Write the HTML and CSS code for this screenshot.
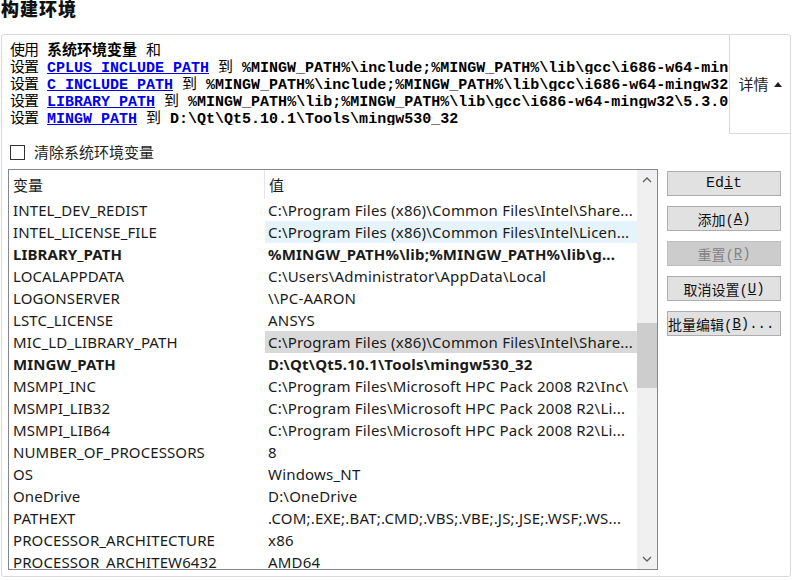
FILE: index.html
```html
<!DOCTYPE html>
<html lang="zh-CN">
<head>
<meta charset="utf-8">
<title>构建环境</title>
<link rel="stylesheet" href="styles.css">
</head>
<body>
<div class="title">构建环境</div>
<div class="panel">
  <div class="top">
    <div class="info">
      <div class="ln"><span class="cjk">使用</span> <b class="cjk">系统环境变量</b> <span class="cjk">和</span></div>
      <div class="ln"><span class="cjk">设置</span> <a class="lk">CPLUS_INCLUDE_PATH</a> <span class="cjk">到</span> <b>%MINGW_PATH%\include;%MINGW_PATH%\lib\gcc\i686-w64-mingw32\5.3.0\include</b></div>
      <div class="ln"><span class="cjk">设置</span> <a class="lk">C_INCLUDE_PATH</a> <span class="cjk">到</span> <b>%MINGW_PATH%\include;%MINGW_PATH%\lib\gcc\i686-w64-mingw32\5.3.0\include</b></div>
      <div class="ln"><span class="cjk">设置</span> <a class="lk">LIBRARY_PATH</a> <span class="cjk">到</span> <b>%MINGW_PATH%\lib;%MINGW_PATH%\lib\gcc\i686-w64-mingw32\5.3.0</b></div>
      <div class="ln"><span class="cjk">设置</span> <a class="lk">MINGW_PATH</a> <span class="cjk">到</span> <b>D:\Qt\Qt5.10.1\Tools\mingw530_32</b></div>
    </div>
    <div class="details"><span>详情</span><span class="tri"></span></div>
  </div>
  <label class="check"><span class="box"></span><span>清除系统环境变量</span></label>
  <div class="main">
    <div class="list">
      <div class="table">
        <div class="head">
          <div class="hc c1">变量</div>
          <div class="hc c2">值</div>
        </div>
        <div class="row"><div class="c1">INTEL_DEV_REDIST</div><div class="c2">C:\Program Files (x86)\Common Files\Intel\Share...</div></div>
        <div class="row"><div class="c1">INTEL_LICENSE_FILE</div><div class="c2 hover">C:\Program Files (x86)\Common Files\Intel\Licen...</div></div>
        <div class="row bold"><div class="c1">LIBRARY_PATH</div><div class="c2">%MINGW_PATH%\lib;%MINGW_PATH%\lib\g...</div></div>
        <div class="row"><div class="c1">LOCALAPPDATA</div><div class="c2">C:\Users\Administrator\AppData\Local</div></div>
        <div class="row"><div class="c1">LOGONSERVER</div><div class="c2">\\PC-AARON</div></div>
        <div class="row"><div class="c1">LSTC_LICENSE</div><div class="c2">ANSYS</div></div>
        <div class="row"><div class="c1">MIC_LD_LIBRARY_PATH</div><div class="c2 sel">C:\Program Files (x86)\Common Files\Intel\Share...</div></div>
        <div class="row bold"><div class="c1">MINGW_PATH</div><div class="c2">D:\Qt\Qt5.10.1\Tools\mingw530_32</div></div>
        <div class="row"><div class="c1">MSMPI_INC</div><div class="c2">C:\Program Files\Microsoft HPC Pack 2008 R2\Inc\</div></div>
        <div class="row"><div class="c1">MSMPI_LIB32</div><div class="c2">C:\Program Files\Microsoft HPC Pack 2008 R2\Li...</div></div>
        <div class="row"><div class="c1">MSMPI_LIB64</div><div class="c2">C:\Program Files\Microsoft HPC Pack 2008 R2\Li...</div></div>
        <div class="row"><div class="c1">NUMBER_OF_PROCESSORS</div><div class="c2">8</div></div>
        <div class="row"><div class="c1">OS</div><div class="c2">Windows_NT</div></div>
        <div class="row"><div class="c1">OneDrive</div><div class="c2">D:\OneDrive</div></div>
        <div class="row"><div class="c1">PATHEXT</div><div class="c2">.COM;.EXE;.BAT;.CMD;.VBS;.VBE;.JS;.JSE;.WSF;.WS...</div></div>
        <div class="row"><div class="c1">PROCESSOR_ARCHITECTURE</div><div class="c2">x86</div></div>
        <div class="row"><div class="c1">PROCESSOR_ARCHITEW6432</div><div class="c2">AMD64</div></div>
      </div>
      <div class="scroll">
        <div class="arrow">
          <svg width="10" height="6" viewBox="0 0 10 6"><path d="M1 5 L5 1 L9 5" fill="none" stroke="#606060" stroke-width="1.3"/></svg>
        </div>
        <div class="track">
          <div class="thumb"></div>
        </div>
        <div class="arrow">
          <svg width="10" height="6" viewBox="0 0 10 6"><path d="M1 1 L5 5 L9 1" fill="none" stroke="#606060" stroke-width="1.3"/></svg>
        </div>
      </div>
    </div>
    <div class="buttons">
      <div class="btn mono">Ed<u>i</u>t</div>
      <div class="btn">添加(<u>A</u>)</div>
      <div class="btn disabled">重置(<u>R</u>)</div>
      <div class="btn">取消设置(<u>U</u>)</div>
      <div class="btn left">批量编辑(<u>B</u>)...</div>
    </div>
  </div>
</div>
</body>
</html>
```

FILE: styles.css
```css
html, body {
  margin: 0;
  padding: 0;
  background: #ffffff;
}
body {
  width: 799px;
  height: 581px;
  overflow: hidden;
  font-family: "Noto Sans", "Noto Sans CJK SC", sans-serif;
  color: #000;
}
.title {
  height: 18px;
  line-height: 16px;
  padding-left: 1px;
  font-family: "Noto Sans CJK SC", sans-serif;
  font-weight: 900;
  font-size: 18px;
  letter-spacing: 1px;
  color: #111;
  overflow: hidden;
}
.panel {
  margin-top: 16px;
  margin-left: 1px;
  width: 788px;
  height: 541px;
  border: 1px solid #dadada;
  border-radius: 3px;
}
.top {
  display: flex;
  height: 99px;
}
.info {
  flex: 1;
  min-width: 0;
  overflow: hidden;
  white-space: nowrap;
  padding: 5px 0 0 8px;
  font-family: "Liberation Mono", "Noto Sans CJK SC", monospace;
  font-size: 15px;
}
.ln {
  height: 17px;
  line-height: 17px;
  overflow: hidden;
}
.info b {
  font-weight: 700;
}
.cjk {
  font-family: "Noto Sans CJK SC", sans-serif;
  font-size: 15px;
  line-height: 17px;
}
.ln > .cjk:first-child {
  letter-spacing: -1px;
}
b.cjk {
  font-weight: 700;
}
.lk {
  color: #0000ee;
  text-decoration: underline;
  font-weight: 700;
}
.details {
  width: 60px;
  border-left: 1px solid #dadada;
  border-bottom: 1px solid #dadada;
  display: flex;
  align-items: center;
  justify-content: center;
  gap: 5px;
  font-family: "Noto Sans CJK SC", sans-serif;
  font-size: 15px;
  line-height: 18px;
  color: #222;
}
.tri {
  width: 0;
  height: 0;
  border-left: 4px solid transparent;
  border-right: 4px solid transparent;
  border-bottom: 5px solid #222;
}
.check {
  display: flex;
  align-items: center;
  height: 18px;
  margin-top: 9px;
  padding-left: 8px;
  font-family: "Noto Sans CJK SC", sans-serif;
  font-size: 15px;
  line-height: 18px;
  color: #222;
}
.box {
  width: 13px;
  height: 13px;
  border: 1px solid #333;
  margin-right: 9px;
}
.main {
  display: flex;
  margin-top: 8px;
  margin-left: 6px;
  gap: 9px;
}
.list {
  width: 648px;
  height: 399px;
  border: 1px solid #828790;
  display: flex;
  overflow: hidden;
}
.table {
  flex: 1;
  min-width: 0;
  font-size: 15px;
  color: #1a1a1a;
}
.head {
  display: flex;
  height: 29px;
  font-family: "Noto Sans CJK SC", sans-serif;
  font-size: 15px;
}
.hc {
  line-height: 29px;
}
.head .c1 {
  border-right: 1px solid #e5e5e5;
}
.row {
  display: flex;
  height: 22px;
  line-height: 22px;
}
.c1 {
  width: 251px;
  padding-left: 4px;
  white-space: nowrap;
  overflow: hidden;
  letter-spacing: 0.1px;
}
.c2 {
  flex: 1;
  min-width: 0;
  padding-left: 3px;
  margin-left: 1px;
  white-space: nowrap;
  overflow: hidden;
  text-overflow: ellipsis;
  letter-spacing: 0.2px;
}
.row.bold {
  font-weight: 700;
}
.hover {
  background: #e5f3fb;
}
.sel {
  background: #d9d9d9;
}
.scroll {
  width: 20px;
  background: #f0f0f0;
  display: flex;
  flex-direction: column;
}
.arrow {
  height: 20px;
  display: flex;
  align-items: center;
  justify-content: center;
}
.track {
  flex: 1;
  padding-top: 133px;
}
.thumb {
  height: 65px;
  background: #cdcdcd;
}
.buttons {
  display: flex;
  flex-direction: column;
  gap: 10px;
  padding-top: 2px;
}
.btn {
  width: 112px;
  height: 23px;
  border: 1px solid #adadad;
  background: #e1e1e1;
  display: flex;
  align-items: center;
  justify-content: center;
  font-family: "Liberation Mono", "Noto Sans CJK SC", monospace;
  font-size: 14px;
  color: #111;
  white-space: nowrap;
}
.btn.mono {
  font-size: 15px;
}
.btn.left {
  justify-content: flex-start;
  padding-left: 0;
}
.btn.disabled {
  background: #cccccc;
  border-color: #bfbfbf;
  color: #838383;
}
```
